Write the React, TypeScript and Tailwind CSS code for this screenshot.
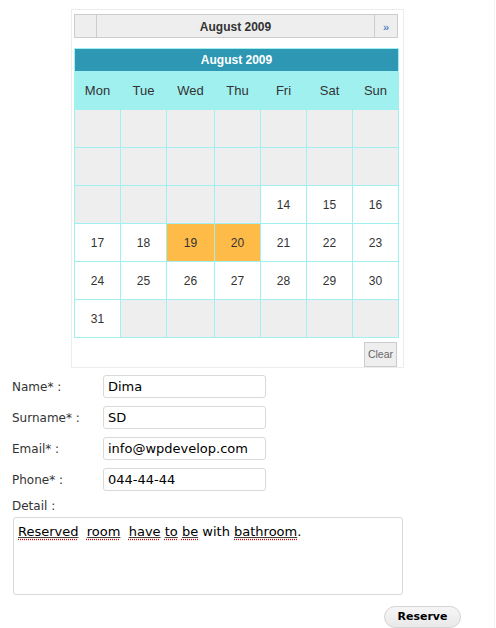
import React from "react";

const arial = { fontFamily: '"Liberation Sans", Arial, sans-serif' };
const dejavu = { fontFamily: '"DejaVu Sans", Verdana, sans-serif' };

type Cell = { n?: number; sel?: boolean };

const rows: Cell[][] = [
  [{}, {}, {}, {}, {}, {}, {}],
  [{}, {}, {}, {}, {}, {}, {}],
  [{}, {}, {}, {}, { n: 14 }, { n: 15 }, { n: 16 }],
  [{ n: 17 }, { n: 18 }, { n: 19, sel: true }, { n: 20, sel: true }, { n: 21 }, { n: 22 }, { n: 23 }],
  [{ n: 24 }, { n: 25 }, { n: 26 }, { n: 27 }, { n: 28 }, { n: 29 }, { n: 30 }],
  [{ n: 31 }, {}, {}, {}, {}, {}, {}],
];

const days = ["Mon", "Tue", "Wed", "Thu", "Fri", "Sat", "Sun"];

function Field({ label, value }: { label: string; value: string }) {
  return (
    <div className="flex items-center h-[23px]">
      <div className="w-[103px] pl-[12px] text-[12px] text-[#333]" style={dejavu}>
        {label}
      </div>
      <div
        className="w-[163px] h-[23px] border border-[#d9d9d9] rounded-[3px] pl-[4px] flex items-center text-[13px] text-black bg-white"
        style={dejavu}
      >
        {value}
      </div>
    </div>
  );
}

function Sp({ children }: { children: React.ReactNode }) {
  return (
    <span className="underline decoration-dotted decoration-[#e00000] underline-offset-[3px]">
      <span className="underline decoration-[#444] underline-offset-[1px]">{children}</span>
    </span>
  );
}

export default function App() {
  return (
    <div className="w-[495px] h-[628px] bg-white border-r border-[#f2f2f2] overflow-hidden">
      {/* Calendar box */}
      <div className="ml-[71px] mt-[9px] w-[333px] border border-[#ececec] pt-[4px] pl-[2px]">
        {/* Nav */}
        <div className="w-[324px] h-[24px] flex border border-[#cccccc] bg-[#eeeeee]" style={arial}>
          <div className="w-[22px] border-r border-[#cccccc]" />
          <div className="flex-1 flex items-center justify-center text-[12px] font-bold text-[#333] pt-[1px]">
            August 2009
          </div>
          <div className="w-[23px] border-l border-[#cccccc] flex items-center justify-center text-[11px] text-[#2a5db0] pt-[2px]">
            »
          </div>
        </div>

        {/* Table */}
        <div className="mt-[10px] w-[325px] border border-[#a0f0f0]" style={arial}>
          <div className="h-[22px] bg-[#2e97b3] flex items-center justify-center text-white font-bold text-[12px]">
            August 2009
          </div>
          <div className="grid grid-cols-[45px_45px_47px_45px_45px_45px_45px] gap-x-px h-[38px] bg-[#a0f0f0]">
            {days.map((d) => (
              <div key={d} className="flex items-center justify-center text-[13px] text-[#333] pt-[1px]">
                {d}
              </div>
            ))}
          </div>
          <div className="grid grid-cols-[45px_45px_47px_45px_45px_45px_45px] auto-rows-[37px] gap-px bg-[#a0f0f0] border-t border-[#a0f0f0]">
            {rows.flat().map((c, i) => (
              <div
                key={i}
                className={
                  "flex items-center justify-center text-[12px] text-[#333] " +
                  (c.sel ? "bg-[#ffbb47]" : c.n ? "bg-white" : "bg-[#eeeeee]")
                }
              >
                {c.n ?? ""}
              </div>
            ))}
          </div>
        </div>

        {/* Clear */}
        <div className="flex justify-end w-[325px] pr-[2px] mt-[4px]">
          <div
            className="w-[33px] h-[25px] border border-[#cccccc] bg-[#eeeeee] flex items-center justify-center text-[10.5px] text-[#666]"
            style={arial}
          >
            Clear
          </div>
        </div>
      </div>

      {/* Form */}
      <div className="mt-[7px] flex flex-col gap-[8px]">
        <Field label="Name* :" value="Dima" />
        <Field label="Surname* :" value="SD" />
        <Field label="Email* :" value="info@wpdevelop.com" />
        <Field label="Phone* :" value="044-44-44" />
      </div>

      <div className="mt-[8px] pl-[12px] text-[12px] text-[#333] leading-[15px]" style={dejavu}>
        Detail :
      </div>
      <div
        className="ml-[13px] mt-[3px] w-[390px] h-[78px] border border-[#d9d9d9] rounded-[3px] px-[4px] pt-[4px] text-[13px] text-black whitespace-pre"
        style={dejavu}
      >
        <Sp>Reserved</Sp>{"  "}<Sp>room</Sp>{"  "}<Sp>have</Sp> <Sp>to</Sp> <Sp>be</Sp> with <Sp>bathroom</Sp>.
      </div>

      <div className="flex justify-end pr-[33px] mt-[11px]">
        <div
          className="w-[77px] h-[22px] rounded-full border border-[#d4d4d4] bg-gradient-to-b from-[#f6f6f6] to-[#e9e9e9] flex items-center justify-center text-[11px] font-bold text-black"
          style={dejavu}
        >
          Reserve
        </div>
      </div>
    </div>
  );
}
